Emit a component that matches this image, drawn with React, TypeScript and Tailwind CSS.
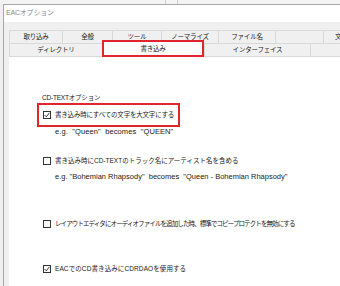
import React from 'react';

const font = { fontFamily: '"Liberation Sans", "Noto Sans CJK JP", sans-serif' };

function Box({ checked }: { checked?: boolean }) {
  return (
    <div className="w-[8px] h-[8px] shrink-0 border border-[#333] bg-white flex items-center justify-center">
      {checked && (
        <svg width="6" height="6" viewBox="0 0 6 6">
          <polyline points="0.6,3 2.3,4.8 5.4,0.8" fill="none" stroke="#222" strokeWidth="0.9" />
        </svg>
      )}
    </div>
  );
}

function Tab({ w, label }: { w?: string; label?: string }) {
  return (
    <div
      className={`${w ?? 'flex-1'} h-full bg-[#f0f0f0] border-t border-l border-[#d9d9d9] flex items-center justify-center text-[6.5px] tracking-[-0.2px] text-[#222]`}
    >
      {label}
    </div>
  );
}

export default function App() {
  return (
    <div className="w-[340px] h-[286px] bg-[#f0f0f0] overflow-hidden flex flex-col" style={font}>
      {/* desktop behind window */}
      <div className="h-[4px] flex shrink-0 bg-[#f3f3f3]">
        <div className="w-[165px]" />
        <div className="w-[1px] bg-[#cfcfcf]" />
        <div className="w-[11px]" />
        <div className="w-[1px] bg-[#cfcfcf]" />
      </div>

      <div className="flex-1 flex pl-[3px]">
        <div className="flex-1 flex flex-col border-l border-t border-[#a8a8a8]">
          <div className="h-[17px] bg-white flex items-center pl-[2px] text-[7px] text-[#8a8a8a] tracking-[-0.2px] shrink-0">
            EACオプション
          </div>

          <div className="flex-1 flex flex-col pl-[5px] pt-[8px] bg-[#f0f0f0]">
            <div className="h-[13px] flex shrink-0">
              <Tab w="w-[53px]" label="取り込み" />
              <Tab w="w-[50px]" label="全般" />
              <Tab w="w-[49px]" label="ツール" />
              <Tab w="w-[57px]" label="ノーマライズ" />
              <Tab w="w-[57px]" label="ファイル名" />
              <Tab w="w-[48px]" label="" />
              <div className="flex-1 h-full border-t border-l border-[#d9d9d9] pl-[11px] text-[6.5px] text-[#222] flex items-center">
                文
              </div>
            </div>

            <div className="h-[14px] flex shrink-0 border-b border-[#d9d9d9]">
              <Tab w="w-[93px]" label="ディレクトリ" />
              <div className="w-[102px] h-[17px] -mt-[3px] relative z-10 bg-white border-2 border-[#e0252d] flex items-center justify-center text-[6.5px] tracking-[-0.2px] text-[#222]">
                書き込み
              </div>
              <Tab w="w-[106px]" label="インターフェイス" />
              <Tab />
            </div>

            <div className="flex-1 bg-white flex flex-col pl-[28px] pt-[36px] text-[6.5px] text-[#222] tracking-[-0.2px]">
              <div className="h-[10px] flex items-center pl-[5px]">CD-TEXTオプション</div>

              <div className="w-[143px] h-[24px] border-2 border-[#e0252d] flex items-center pl-[4px] gap-[4px]">
                <Box checked />
                <span>書き込み時にすべての文字を大文字にする</span>
              </div>

              <div className="h-[10px] flex items-center pl-[18px] text-[7.5px] tracking-[0.1px]">
                e.g.&nbsp; "Queen"&nbsp; becomes&nbsp; "QUEEN"
              </div>

              <div className="h-[10px] mt-[19px] flex items-center pl-[6px] gap-[4px]">
                <Box />
                <span className="tracking-[0px]">書き込み時にCD-TEXTのトラック名にアーティスト名を含める</span>
              </div>

              <div className="h-[10px] mt-[6px] flex items-center pl-[18px] text-[7.5px] tracking-normal">
                e.g. "Bohemian Rhapsody"&nbsp; becomes&nbsp; "Queen - Bohemian Rhapsody"
              </div>

              <div className="h-[10px] mt-[37px] flex items-center pl-[6px] gap-[4px]">
                <Box />
                <span className="tracking-[-0.9px]">
                  レイアウトエディタにオーディオファイルを追加した時、標準でコピープロテクトを無効にする
                </span>
              </div>

              <div className="h-[10px] mt-[35px] flex items-center pl-[6px] gap-[4px]">
                <Box checked />
                <span className="tracking-[0.1px]">EACでのCD書き込みにCDRDAOを使用する</span>
              </div>
            </div>
          </div>
        </div>
      </div>
    </div>
  );
}
